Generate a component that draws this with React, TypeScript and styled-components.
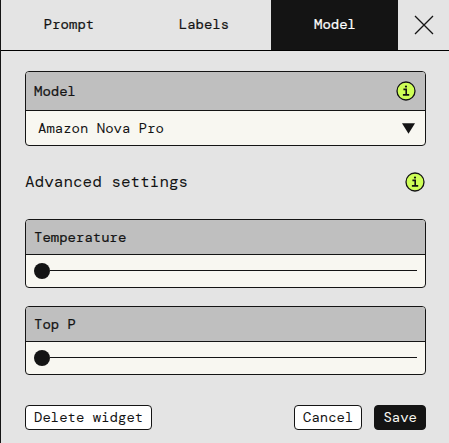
import React from "react";
import styled, { createGlobalStyle } from "styled-components";

const INK = "#141414";

const GlobalStyle = createGlobalStyle`
  * { box-sizing: border-box; }
  body {
    margin: 0;
    overflow: hidden;
    background: #e4e4e4;
    color: ${INK};
    font: 14px/20px "DM Mono", "Liberation Mono", monospace;
  }
  button { font: inherit; color: inherit; margin: 0; }
`;

const Panel = styled.main`
  height: 443px;
  border-left: 1px solid ${INK};
`;

const TabBar = styled.nav`
  display: grid;
  grid-template-columns: 135px 135px 127px 1fr;
  height: 51px;
  border-bottom: 1px solid #000;
`;

const Tab = styled.button<{ $active?: boolean }>`
  border: 0;
  padding: 0 0 2px 1px;
  background: ${(p) => (p.$active ? INK : "transparent")};
  color: ${(p) => (p.$active ? "#fff" : INK)};
  -webkit-text-stroke: 0.22px currentColor;
`;

const CloseButton = styled.button`
  display: flex;
  align-items: flex-start;
  border: 0;
  padding: 15px 0 0 16px;
  background: transparent;
`;

const Content = styled.div`
  display: flex;
  flex-direction: column;
  padding: 20px 23px 0 24px;
`;

const Card = styled.section`
  border: 1px solid ${INK};
  border-radius: 4px;
  overflow: hidden;
  background: #f8f7f1;
`;

const SliderCard = styled(Card)`
  margin-bottom: 18px;
`;

const CardHeader = styled.header<{ $height: number }>`
  display: flex;
  align-items: center;
  justify-content: space-between;
  height: ${(p) => p.$height}px;
  padding: 0 9px 0 8px;
  border-bottom: 1px solid ${INK};
  background: #bfbfbf;
  -webkit-text-stroke: 0.22px currentColor;
`;

const SelectRow = styled.div`
  display: flex;
  align-items: center;
  justify-content: space-between;
  height: 34px;
  padding: 0 10px 0 12px;
`;

const SectionHeading = styled.div`
  display: flex;
  align-items: center;
  justify-content: space-between;
  height: 73px;
  padding: 0 1px 1px 0;
  font-size: 16px;
`;

const SliderBody = styled.div`
  display: flex;
  align-items: center;
  height: 32px;
  padding: 0 8px;
`;

const Knob = styled.span`
  flex: none;
  width: 16px;
  height: 16px;
  border-radius: 50%;
  background: ${INK};
`;

const Track = styled.span`
  flex: 1;
  height: 1px;
  margin-bottom: 1px;
  background: ${INK};
`;

const Footer = styled.footer`
  display: flex;
  gap: 12px;
  margin-top: 12px;
`;

const Button = styled.button<{ $primary?: boolean; $pushRight?: boolean }>`
  height: 25px;
  padding: 0 8px;
  border: 1px solid ${INK};
  border-radius: 4px;
  line-height: 23px;
  background: ${(p) => (p.$primary ? INK : "#fff")};
  color: ${(p) => (p.$primary ? "#f8f7f1" : INK)};
  ${(p) => p.$pushRight && "margin-right: auto;"}
`;

const Icon = styled.svg`
  display: block;
  flex: none;
`;

const InfoIcon = () => (
  <Icon width="20" height="20" viewBox="0 0 20 20" fill="none" aria-label="Info">
    <circle cx="10" cy="10" r="9" fill="#ceff57" stroke={INK} strokeWidth="1.3" />
    <path d="M7.4 8.4h2.8v5.2M6.9 13.9h6.3" stroke={INK} strokeWidth="1.6" />
    <circle cx="10" cy="5.6" r="1.1" fill={INK} />
  </Icon>
);

const CloseIcon = () => (
  <Icon width="20" height="20" viewBox="0 0 20 20" aria-label="Close">
    <path d="M1 1l18 18M19 1L1 19" stroke={INK} strokeWidth="1.3" />
  </Icon>
);

const CaretIcon = () => (
  <Icon width="13" height="11" viewBox="0 0 13 11">
    <path d="M0 .3h13L6.5 10.8z" fill={INK} />
  </Icon>
);

const Slider = ({ label }: { label: string }) => (
  <SliderCard>
    <CardHeader $height={35}>{label}</CardHeader>
    <SliderBody>
      <Knob />
      <Track />
    </SliderBody>
  </SliderCard>
);

export default function App() {
  return (
    <>
      <GlobalStyle />
      <Panel>
        <TabBar>
          <Tab>Prompt</Tab>
          <Tab>Labels</Tab>
          <Tab $active>Model</Tab>
          <CloseButton>
            <CloseIcon />
          </CloseButton>
        </TabBar>
        <Content>
          <Card>
            <CardHeader $height={39}>
              <span>Model</span>
              <InfoIcon />
            </CardHeader>
            <SelectRow>
              <span>Amazon Nova Pro</span>
              <CaretIcon />
            </SelectRow>
          </Card>
          <SectionHeading>
            <span>Advanced settings</span>
            <InfoIcon />
          </SectionHeading>
          <Slider label="Temperature" />
          <Slider label="Top P" />
          <Footer>
            <Button $pushRight>Delete widget</Button>
            <Button>Cancel</Button>
            <Button $primary>Save</Button>
          </Footer>
        </Content>
      </Panel>
    </>
  );
}
